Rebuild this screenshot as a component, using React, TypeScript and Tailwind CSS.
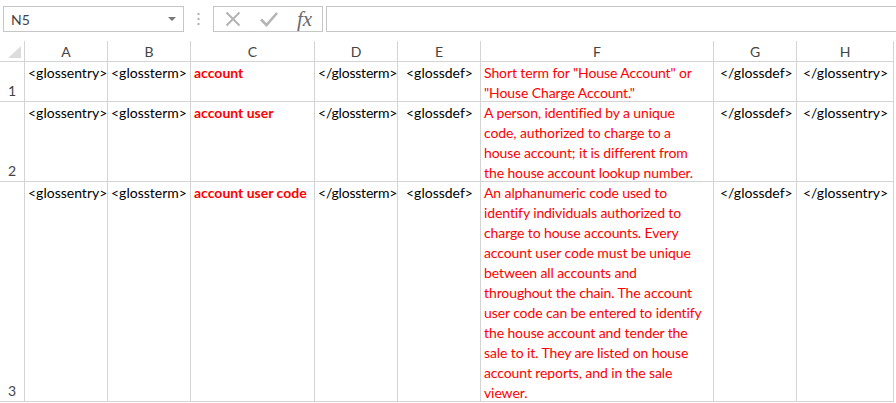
import React from "react";

const cols = ["A", "B", "C", "D", "E", "F", "G", "H"];

type Row = {
  n: string;
  h: string;
  c: string;
  f: string[];
};

const rows: Row[] = [
  {
    n: "1",
    h: "h-[40px]",
    c: "account",
    f: ['Short term for "House Account" or', '"House Charge Account."'],
  },
  {
    n: "2",
    h: "h-[80px]",
    c: "account user",
    f: [
      "A person, identified by a unique",
      "code, authorized to charge to a",
      "house account; it is different from",
      "the house account lookup number.",
    ],
  },
  {
    n: "3",
    h: "h-[220px]",
    c: "account user code",
    f: [
      "An alphanumeric code used to",
      "identify individuals authorized to",
      "charge to house accounts. Every",
      "account user code must be unique",
      "between all accounts and",
      "throughout the chain. The account",
      "user code can be entered to identify",
      "the house account and tender the",
      "sale to it. They are listed on house",
      "account reports, and in the sale",
      "viewer.",
    ],
  },
];

const cell = "border-r border-b border-[#d4d4d4] pl-[3px] pt-[1px] leading-[20px] whitespace-nowrap overflow-hidden";

export default function App() {
  return (
    <div
      className="w-[896px] h-[403px] bg-white overflow-hidden text-[#000]"
      style={{ fontFamily: "Lato, 'Open Sans', sans-serif" }}
    >
      {/* Toolbar */}
      <div className="flex items-center h-[41px] pt-[6px] pb-[9px]">
        <div className="ml-[3px] w-[181px] h-[26px] border border-[#c6c6c6] flex items-center justify-between pl-[7px] pr-[7px]">
          <span className="text-[14px] text-[#444]">N5</span>
          <svg width="8" height="5" viewBox="0 0 8 5">
            <path d="M0 0 L8 0 L4 4 Z" fill="#777" />
          </svg>
        </div>
        <div className="w-[29px] flex justify-center">
          <svg width="3" height="13" viewBox="0 0 3 13">
            <rect x="0.5" y="0" width="2" height="2" fill="#b0b0b0" />
            <rect x="0.5" y="5" width="2" height="2" fill="#b0b0b0" />
            <rect x="0.5" y="10" width="2" height="2" fill="#b0b0b0" />
          </svg>
        </div>
        <div className="w-[110px] h-[26px] border border-[#c6c6c6] flex items-center">
          <div className="w-[37px] flex justify-center">
            <svg width="16" height="16" viewBox="0 0 16 16">
              <path d="M1.5 1.5 L14.5 14.5 M14.5 1.5 L1.5 14.5" stroke="#b4b4b4" strokeWidth="2" />
            </svg>
          </div>
          <div className="w-[36px] flex justify-center">
            <svg width="18" height="16" viewBox="0 0 18 16">
              <path d="M1 8.5 L6.5 14 L17 2" stroke="#b4b4b4" strokeWidth="2.6" fill="none" />
            </svg>
          </div>
          <div className="flex-1 flex justify-center">
            <span
              className="text-[21px] italic text-[#6a6a6a] leading-none"
              style={{ fontFamily: "'Liberation Serif', serif" }}
            >
              fx
            </span>
          </div>
        </div>
        <div className="ml-[3px] flex-1 h-[26px] border border-[#c6c6c6] border-r-0" />
      </div>

      {/* Grid */}
      <div className="grid grid-cols-[25px_83px_83px_124px_83px_83px_233px_83px_97px] text-[14px]">
        {/* Header row */}
        <div className="h-[21px] border-r border-b border-[#d4d4d4] relative">
          <svg className="absolute left-[8px] top-[5px]" width="13" height="12" viewBox="0 0 13 12">
            <path d="M13 0 L13 12 L0 12 Z" fill="#dcdcdc" />
          </svg>
        </div>
        {cols.map((c) => (
          <div
            key={c}
            className="h-[21px] border-r border-b border-[#d4d4d4] flex items-center justify-center text-[#444] text-[14px]"
          >
            {c}
          </div>
        ))}

        {rows.map((r) => (
          <React.Fragment key={r.n}>
            <div
              className={`${r.h} border-r border-b border-[#d4d4d4] flex items-end justify-center text-[#444] text-[14px] leading-[20px]`}
            >
              {r.n}
            </div>
            <div className={`${r.h} ${cell}`}>&lt;glossentry&gt;</div>
            <div className={`${r.h} ${cell}`}>&lt;glossterm&gt;</div>
            <div className={`${r.h} ${cell} text-[#ff0000] font-bold`}>{r.c}</div>
            <div className={`${r.h} ${cell} tracking-[-0.2px]`}>&lt;/glossterm&gt;</div>
            <div className={`${r.h} ${cell} pl-[8px]`}>&lt;glossdef&gt;</div>
            <div className={`${r.h} ${cell} text-[#ff0000] tracking-[-0.1px]`}>
              {r.f.map((l, i) => (
                <div key={i}>{l}</div>
              ))}
            </div>
            <div className={`${r.h} ${cell} pl-[6px]`}>&lt;/glossdef&gt;</div>
            <div className={`${r.h} ${cell} pl-[6px]`}>&lt;/glossentry&gt;</div>
          </React.Fragment>
        ))}
      </div>
    </div>
  );
}
